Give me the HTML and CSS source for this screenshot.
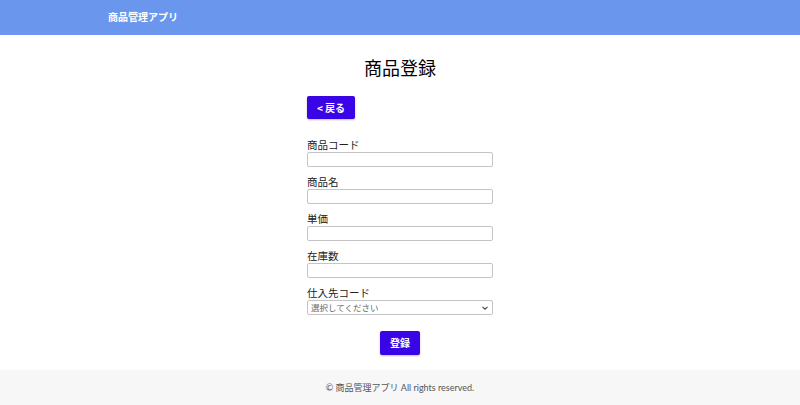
FILE: index.html
```html
<!DOCTYPE html>
<html lang="ja">
<head>
<meta charset="utf-8">
<title>商品登録</title>
<link rel="stylesheet" href="styles.css">
</head>
<body>
<header class="app-header">
  <div class="brand">商品管理アプリ</div>
</header>
<main class="page">
  <h1 class="page-title">商品登録</h1>
  <div class="form-wrap">
    <div class="back-row"><button class="btn btn-back" type="button">&lt; 戻る</button></div>
    <form class="form">
      <div class="field">
        <label class="label">商品コード</label>
        <input class="input" type="text">
      </div>
      <div class="field">
        <label class="label">商品名</label>
        <input class="input" type="text">
      </div>
      <div class="field">
        <label class="label">単価</label>
        <input class="input" type="text">
      </div>
      <div class="field">
        <label class="label">在庫数</label>
        <input class="input" type="text">
      </div>
      <div class="field">
        <label class="label">仕入先コード</label>
        <div class="select">
          <span class="select-text">選択してください</span>
          <svg class="chev" width="8" height="6" viewBox="0 0 8 6"><path d="M1.5 1.8 L4 4.2 L6.5 1.8" fill="none" stroke="#444" stroke-width="1.1"/></svg>
        </div>
      </div>
      <div class="submit-row"><button class="btn btn-submit" type="button">登録</button></div>
    </form>
  </div>
</main>
<footer class="app-footer">© 商品管理アプリ All rights reserved.</footer>
</body>
</html>
```

FILE: styles.css
```css
* { box-sizing: border-box; }
html, body { margin: 0; padding: 0; }
body {
  font-family: "Noto Sans CJK JP", "Noto Sans", sans-serif;
  color: #222;
  background: #fff;
  width: 800px;
  display: flex;
  flex-direction: column;
}
.app-header {
  flex-shrink: 0;
  height: 35px;
  background: #6a96ee;
  display: flex;
  align-items: center;
  padding-left: 108px;
}
.brand {
  color: #fff;
  font-size: 10px;
  font-weight: 700;
  line-height: 14px;
  padding-bottom: 1px;
}
.page {
  padding-top: 19px;
  display: flex;
  flex-direction: column;
  align-items: center;
}
.page-title {
  margin: 0;
  font-size: 18px;
  font-weight: 400;
  line-height: 26px;
  color: #000;
}
.form-wrap {
  width: 186px;
  margin-top: 16px;
}
.back-row { display: flex; }
.btn {
  border: none;
  background: #3a05e6;
  color: #fff;
  font-family: "Noto Sans CJK JP", sans-serif;
  font-weight: 700;
  font-size: 10px;
  border-radius: 2px;
  box-shadow: 0 1px 2px rgba(0,0,0,0.25);
  padding: 0;
  cursor: pointer;
}
.btn-back {
  width: 48px;
  height: 23px;
  line-height: 23px;
}
.form {
  margin-top: 19px;
  display: flex;
  flex-direction: column;
}
.field {
  display: flex;
  flex-direction: column;
}
.field + .field { margin-top: 8px; }
.label {
  font-size: 10.5px;
  line-height: 14px;
  color: #222;
}
.input {
  width: 186px;
  height: 15px;
  border: 1px solid #c4c4c4;
  border-radius: 2px;
  padding: 0 3px;
  font-size: 9px;
  background: #fff;
}
.select {
  width: 186px;
  height: 15px;
  border: 1px solid #c4c4c4;
  border-radius: 2px;
  display: flex;
  align-items: center;
  justify-content: space-between;
  padding: 0 3px 0 3px;
}
.select-text {
  font-size: 8.5px;
  color: #666;
  line-height: 13px;
}
.chev { display: block; }
.submit-row {
  display: flex;
  justify-content: center;
  margin-top: 16px;
}
.btn-submit {
  width: 40px;
  height: 24px;
  line-height: 24px;
}
.app-footer {
  flex-shrink: 0;
  height: 35px;
  margin-top: 15px;
  background: #f7f7f7;
  color: #555;
  font-family: "Lato", "Noto Sans CJK JP", sans-serif;
  font-size: 9px;
  display: flex;
  align-items: center;
  justify-content: center;
}
```
